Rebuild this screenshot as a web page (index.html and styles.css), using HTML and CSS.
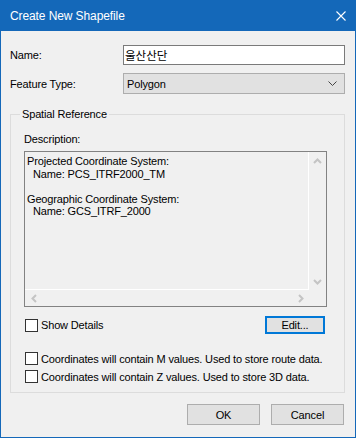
FILE: index.html
```html
<!DOCTYPE html>
<html lang="en">
<head>
    <meta charset="UTF-8">
    <title>Create New Shapefile</title>
    <link rel="stylesheet" href="styles.css">
</head>
<body>
    <div class="window">
        <div class="titlebar">
            <span class="title">Create New Shapefile</span>
            <svg class="close" width="10" height="10" viewBox="0 0 10 10">
                <path d="M0.5 0.5 L9.5 9.5 M9.5 0.5 L0.5 9.5" stroke="#ffffff" stroke-width="1.1" fill="none"/>
            </svg>
        </div>
        <div class="content">
            <div class="row">
                <span class="label">Name:</span>
                <div class="textbox"><span class="korean">울산산단</span></div>
            </div>
            <div class="row row-type">
                <span class="label">Feature Type:</span>
                <div class="combo">
                    <span>Polygon</span>
                    <svg width="9" height="5" viewBox="0 0 9 5">
                        <path d="M0.5 0.5 L4.5 4.5 L8.5 0.5" stroke="#444444" stroke-width="1" fill="none"/>
                    </svg>
                </div>
            </div>

            <div class="group">
                <div class="legend">Spatial Reference</div>
                <div class="desc-label">Description:</div>
                <div class="desc-box">
                    <div class="desc-text">
                        <div>Projected Coordinate System:</div>
                        <div class="indent">Name: PCS_ITRF2000_TM</div>
                        <div>&nbsp;</div>
                        <div>Geographic Coordinate System:</div>
                        <div class="indent">Name: GCS_ITRF_2000</div>
                    </div>
                    <div class="vscroll">
                        <div class="arrow">
                            <svg width="9" height="6" viewBox="0 0 9 6"><path d="M1 5 L4.5 1.5 L8 5" stroke="#c4c4c4" stroke-width="2" fill="none"/></svg>
                        </div>
                        <div class="arrow">
                            <svg width="9" height="6" viewBox="0 0 9 6"><path d="M1 1 L4.5 4.5 L8 1" stroke="#c4c4c4" stroke-width="2" fill="none"/></svg>
                        </div>
                    </div>
                    <div class="hscroll">
                        <div class="arrow">
                            <svg width="6" height="9" viewBox="0 0 6 9"><path d="M5 1 L1.5 4.5 L5 8" stroke="#c4c4c4" stroke-width="2" fill="none"/></svg>
                        </div>
                        <div class="arrow">
                            <svg width="6" height="9" viewBox="0 0 6 9"><path d="M1 1 L4.5 4.5 L1 8" stroke="#c4c4c4" stroke-width="2" fill="none"/></svg>
                        </div>
                    </div>
                    <div class="corner"></div>
                </div>

                <div class="details-row">
                    <label class="check"><span class="box"></span>Show Details</label>
                    <div class="btn btn-edit">Edit...</div>
                </div>

                <label class="check check-m"><span class="box"></span>Coordinates will contain M values. Used to store route data.</label>
                <label class="check check-z"><span class="box"></span>Coordinates will contain Z values. Used to store 3D data.</label>
            </div>

            <div class="buttons">
                <div class="btn">OK</div>
                <div class="btn">Cancel</div>
            </div>
        </div>
    </div>
</body>
</html>
```

FILE: styles.css
```css
* {
    box-sizing: border-box;
}
body {
    margin: 0;
    padding: 0;
    background-color: #ffffff;
    font-family: 'Liberation Sans', Arial, sans-serif;
    font-size: 11px;
    letter-spacing: -0.15px;
    color: #000000;
}
.window {
    width: 356px;
    height: 438px;
    background-color: #f0f0f0;
    border: 1px solid #1468b9;
    border-top: none;
    display: flex;
    flex-direction: column;
}
.titlebar {
    height: 31px;
    flex-shrink: 0;
    background-color: #1468b9;
    color: #ffffff;
    display: flex;
    align-items: center;
    justify-content: space-between;
    padding: 0 9px 0 9px;
    font-size: 12px;
    letter-spacing: -0.1px;
}
.content {
    padding: 14px 10px 0 9px;
    display: flex;
    flex-direction: column;
}
.row {
    display: flex;
    align-items: center;
}
.row-type {
    margin-top: 8px;
}
.label {
    width: 113px;
}
.textbox {
    width: 222px;
    height: 20px;
    border: 1px solid #7a7a7a;
    background-color: #ffffff;
    padding-left: 1px;
    display: flex;
    align-items: center;
}
.korean {
    font-family: 'Noto Sans CJK KR', sans-serif;
    font-size: 11.5px;
    letter-spacing: 0;
}
.combo {
    width: 222px;
    height: 21px;
    border: 1px solid #adadad;
    background-color: #e1e1e1;
    padding: 0 7px 0 3px;
    display: flex;
    align-items: center;
    justify-content: space-between;
}
.group {
    margin-top: 20px;
    border: 1px solid #dcdcdc;
    padding: 0 0 9px 13px;
    display: flex;
    flex-direction: column;
    align-items: flex-start;
}
.legend {
    margin: -8px 0 0 -4px;
    padding: 0 2px;
    line-height: 15px;
    background-color: #f0f0f0;
}
.desc-label {
    margin-top: 10px;
    line-height: 15px;
}
.desc-box {
    margin-top: 4px;
    width: 303px;
    height: 156px;
    border: 1px solid #828282;
    display: grid;
    grid-template-columns: 1fr 17px;
    grid-template-rows: 1fr 16px;
}
.desc-text {
    border-right: 1px solid #ffffff;
    border-bottom: 1px solid #ffffff;
    padding: 3px 0 0 2px;
    line-height: 12.5px;
    white-space: nowrap;
}
.indent {
    padding-left: 6px;
}
.vscroll {
    display: flex;
    flex-direction: column;
    justify-content: space-between;
}
.vscroll .arrow {
    width: 17px;
    height: 17px;
    display: flex;
    align-items: center;
    justify-content: center;
}
.hscroll {
    display: flex;
    justify-content: space-between;
}
.hscroll .arrow {
    width: 17px;
    height: 16px;
    display: flex;
    align-items: center;
    justify-content: center;
}
.details-row {
    margin-top: 9px;
    width: 303px;
    height: 18px;
    display: flex;
    align-items: center;
    justify-content: space-between;
}
.check {
    display: flex;
    align-items: center;
    height: 13px;
    margin-left: 1px;
    white-space: nowrap;
}
.box {
    width: 13px;
    height: 13px;
    border: 1px solid #333333;
    background-color: #ffffff;
    margin-right: 3px;
    flex-shrink: 0;
}
.check-m {
    margin-top: 18px;
}
.check-z {
    margin-top: 5px;
}
.btn {
    width: 73px;
    height: 21px;
    border: 1px solid #adadad;
    background-color: #e1e1e1;
    display: flex;
    align-items: center;
    justify-content: center;
}
.btn-edit {
    width: 60px;
    height: 18px;
    margin-right: 2px;
    border: 2px solid #0078d7;
}
.buttons {
    margin-top: 11px;
    padding-right: 1px;
    display: flex;
    justify-content: flex-end;
    gap: 11px;
}
```
